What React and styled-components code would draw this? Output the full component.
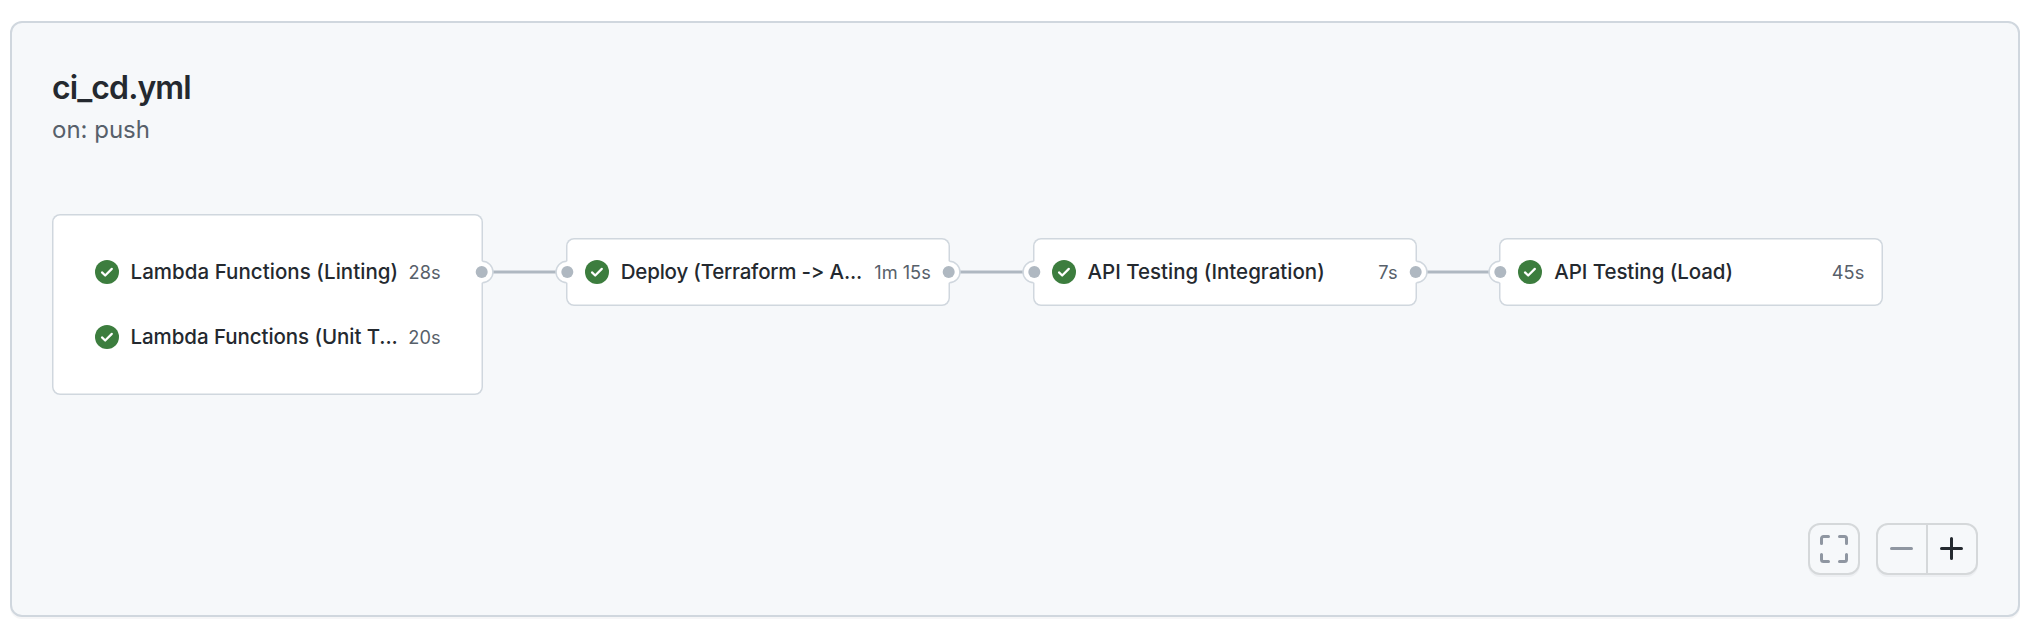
import React from "react";
import styled, { createGlobalStyle } from "styled-components";

const Global = createGlobalStyle`
  *, *::before, *::after { box-sizing: border-box; }
  body { margin: 0; background: #fff; color: #24292f; font-family: Inter, "Liberation Sans", sans-serif; }
`;

const Page = styled.main`
  height: 632px;
  padding: 21px 18px 15px 10px;
`;

const Panel = styled.section`
  display: flex;
  flex-direction: column;
  height: 596px;
  padding: 41px 40px 40px;
  border: 2px solid #d0d7de;
  border-radius: 12px;
  background: #f6f8fa;
  box-shadow: 0 2px 0 rgba(31, 35, 40, 0.04);
`;

const Title = styled.h1`
  margin: 0;
  font-size: 32px;
  line-height: 48px;
  font-weight: 600;
  letter-spacing: -0.9px;
`;

const Trigger = styled.p`
  margin: 0;
  font-size: 24px;
  line-height: 36px;
  color: #57606a;
`;

const Graph = styled.div`
  display: flex;
  align-items: flex-start;
  margin-top: 66px;
`;

const Card = styled.div`
  position: relative;
  flex: none;
  display: flex;
  flex-direction: column;
  gap: 29px;
  width: ${(p) => (p.$group ? 431 : 384)}px;
  height: ${(p) => (p.$group ? 180.5 : 68)}px;
  margin-top: ${(p) => (p.$group ? 0 : 24)}px;
  padding: ${(p) => (p.$group ? "40px 42.5px" : "16px 19px")};
  border-radius: 8px;
  background: #fff;
  box-shadow: inset 0 0 0 1.5px #d0d7de;
`;

const Job = styled.div`
  display: flex;
  align-items: center;
  height: 36px;
`;

const JobName = styled.span`
  margin-left: 12px;
  font-size: 20.5px;
  line-height: 30px;
  font-weight: 500;
  white-space: nowrap;
  font-feature-settings: "calt" 0;
  letter-spacing: ${(p) => p.$track || 0}px;
`;

const Duration = styled.span`
  margin-left: auto;
  font-size: 18.2px;
  line-height: 30px;
  color: #57606a;
  white-space: nowrap;
`;

const Link = styled.div`
  flex: none;
  width: 82.75px;
  height: 4px;
  margin-top: 56px;
  border: solid #d3d8de;
  border-width: 1px 0;
  background: #afb8c1;
`;

const PortMark = styled.svg`
  position: absolute;
  z-index: 1;
  top: ${(p) => (p.$group ? 46 : 22)}px;
  ${(p) => (p.$side === "right" ? "right: -11px;" : "left: -11px;")}
  transform: ${(p) => (p.$side === "left" ? "scaleX(-1)" : "none")};
`;

function Port({ side, group }) {
  return (
    <PortMark $side={side} $group={group} width="24" height="24" viewBox="0 0 24 24">
      <circle cx="11.8" cy="12" r="10.8" fill="#fff" />
      <path d="M12.3 1.3A10.7 10.7 0 0 1 12.3 22.7" fill="none" stroke="#d0d7de" strokeWidth="1.5" />
      <circle cx="11.7" cy="12" r="6" fill="#afb8c1" />
    </PortMark>
  );
}

const Check = () => (
  <svg width="24" height="24" viewBox="0 0 24 24">
    <circle cx="12" cy="12" r="12" fill="#3c7d3e" />
    <path d="M7 12.4l3.2 3.1 6.6-6.6" fill="none" stroke="#fff" strokeWidth="2.2" strokeLinecap="round" strokeLinejoin="round" />
  </svg>
);

const Controls = styled.div`
  display: flex;
  justify-content: flex-end;
  gap: 16px;
  margin-top: auto;
`;

const ButtonGroup = styled.div`
  display: flex;
  height: 52px;
  border: 2px solid #d5d8da;
  border-radius: 12px;
  background: #f6f8fa;
  box-shadow: 0 2px 0 rgba(31, 35, 40, 0.04);
`;

const IconButton = styled.button`
  display: flex;
  align-items: center;
  justify-content: center;
  width: ${(p) => p.$w || 48}px;
  padding: 0;
  border: 0;
  background: none;
  color: ${(p) => (p.$muted ? "#8f96a1" : "#24292f")};
  & + & { border-left: 2px solid #d5d8da; }
  svg { fill: none; stroke: currentColor; stroke-width: 3; stroke-linecap: round; stroke-linejoin: round; }
`;

const stages = [
  { group: true, jobs: [["Lambda Functions (Linting)", "28s", 0.04], ["Lambda Functions (Unit T...", "20s", -0.07]] },
  { jobs: [["Deploy (Terraform -> A...", "1m 15s", -0.2]] },
  { jobs: [["API Testing (Integration)", "7s", 0]] },
  { jobs: [["API Testing (Load)", "45s", -0.07]] },
];

export default function App() {
  return (
    <Page>
      <Global />
      <Panel>
        <Title>ci_cd.yml</Title>
        <Trigger>on: push</Trigger>
        <Graph>
          {stages.map((s, i) => (
            <React.Fragment key={i}>
              {i > 0 && <Link />}
              <Card $group={s.group}>
                {i > 0 && <Port side="left" />}
                {s.jobs.map(([name, time, track]) => (
                  <Job key={name}>
                    <Check />
                    <JobName $track={track}>{name}</JobName>
                    <Duration>{time}</Duration>
                  </Job>
                ))}
                {i < stages.length - 1 && <Port side="right" group={s.group} />}
              </Card>
            </React.Fragment>
          ))}
        </Graph>
        <Controls>
          <ButtonGroup>
            <IconButton $muted aria-label="Fit to window">
              <svg width="28" height="28" viewBox="0 0 28 28">
                <path d="M1.5 8.5V3.5a2 2 0 0 1 2-2H8.5M19.5 1.5h5a2 2 0 0 1 2 2v5M26.5 19.5v5a2 2 0 0 1-2 2h-5M8.5 26.5h-5a2 2 0 0 1-2-2v-5" />
              </svg>
            </IconButton>
          </ButtonGroup>
          <ButtonGroup>
            <IconButton $muted aria-label="Zoom out">
              <svg width="24" height="24" viewBox="0 0 24 24"><path d="M1.5 11.5h20" /></svg>
            </IconButton>
            <IconButton $w={50} aria-label="Zoom in">
              <svg width="24" height="24" viewBox="0 0 24 24"><path d="M1.5 11.5h20M11.5 1.5v20" /></svg>
            </IconButton>
          </ButtonGroup>
        </Controls>
      </Panel>
    </Page>
  );
}
